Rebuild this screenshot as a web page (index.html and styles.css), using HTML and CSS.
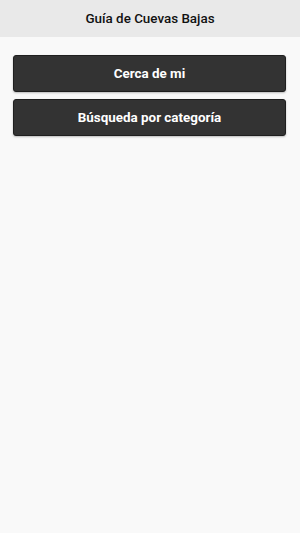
FILE: index.html
```html
<!DOCTYPE html>
<html lang="es">
<head>
<meta charset="utf-8">
<title>Guía de Cuevas Bajas</title>
<link rel="stylesheet" href="styles.css">
</head>
<body>
<header class="bar"><h1 class="title">Guía de Cuevas Bajas</h1></header>
<main class="content">
  <button class="btn">Cerca de mi</button>
  <button class="btn">Búsqueda por categoría</button>
</main>
</body>
</html>
```
FILE: styles.css
```css
html, body { margin: 0; padding: 0; }
body {
  background: #f9f9f9;
  font-family: Roboto, "Noto Sans", sans-serif;
  min-height: 533px;
}
.bar {
  background: #e9e9e9;
  height: 37px;
  display: flex;
  align-items: center;
  justify-content: center;
}
.title {
  margin: 0;
  font-size: 13.4px;
  font-weight: 500;
  color: #111;
}
.content {
  display: flex;
  flex-direction: column;
  gap: 7px;
  padding: 18px 14px 18px 13px;
}
.btn {
  height: 37px;
  border: 1px solid #1f1f1f;
  border-radius: 3px;
  background: #333;
  color: #fff;
  font-family: Roboto, "Noto Sans", sans-serif;
  font-size: 13.4px;
  font-weight: 700;
  box-shadow: 0 1px 2px rgba(0,0,0,0.25);
  padding: 0;
}
```
